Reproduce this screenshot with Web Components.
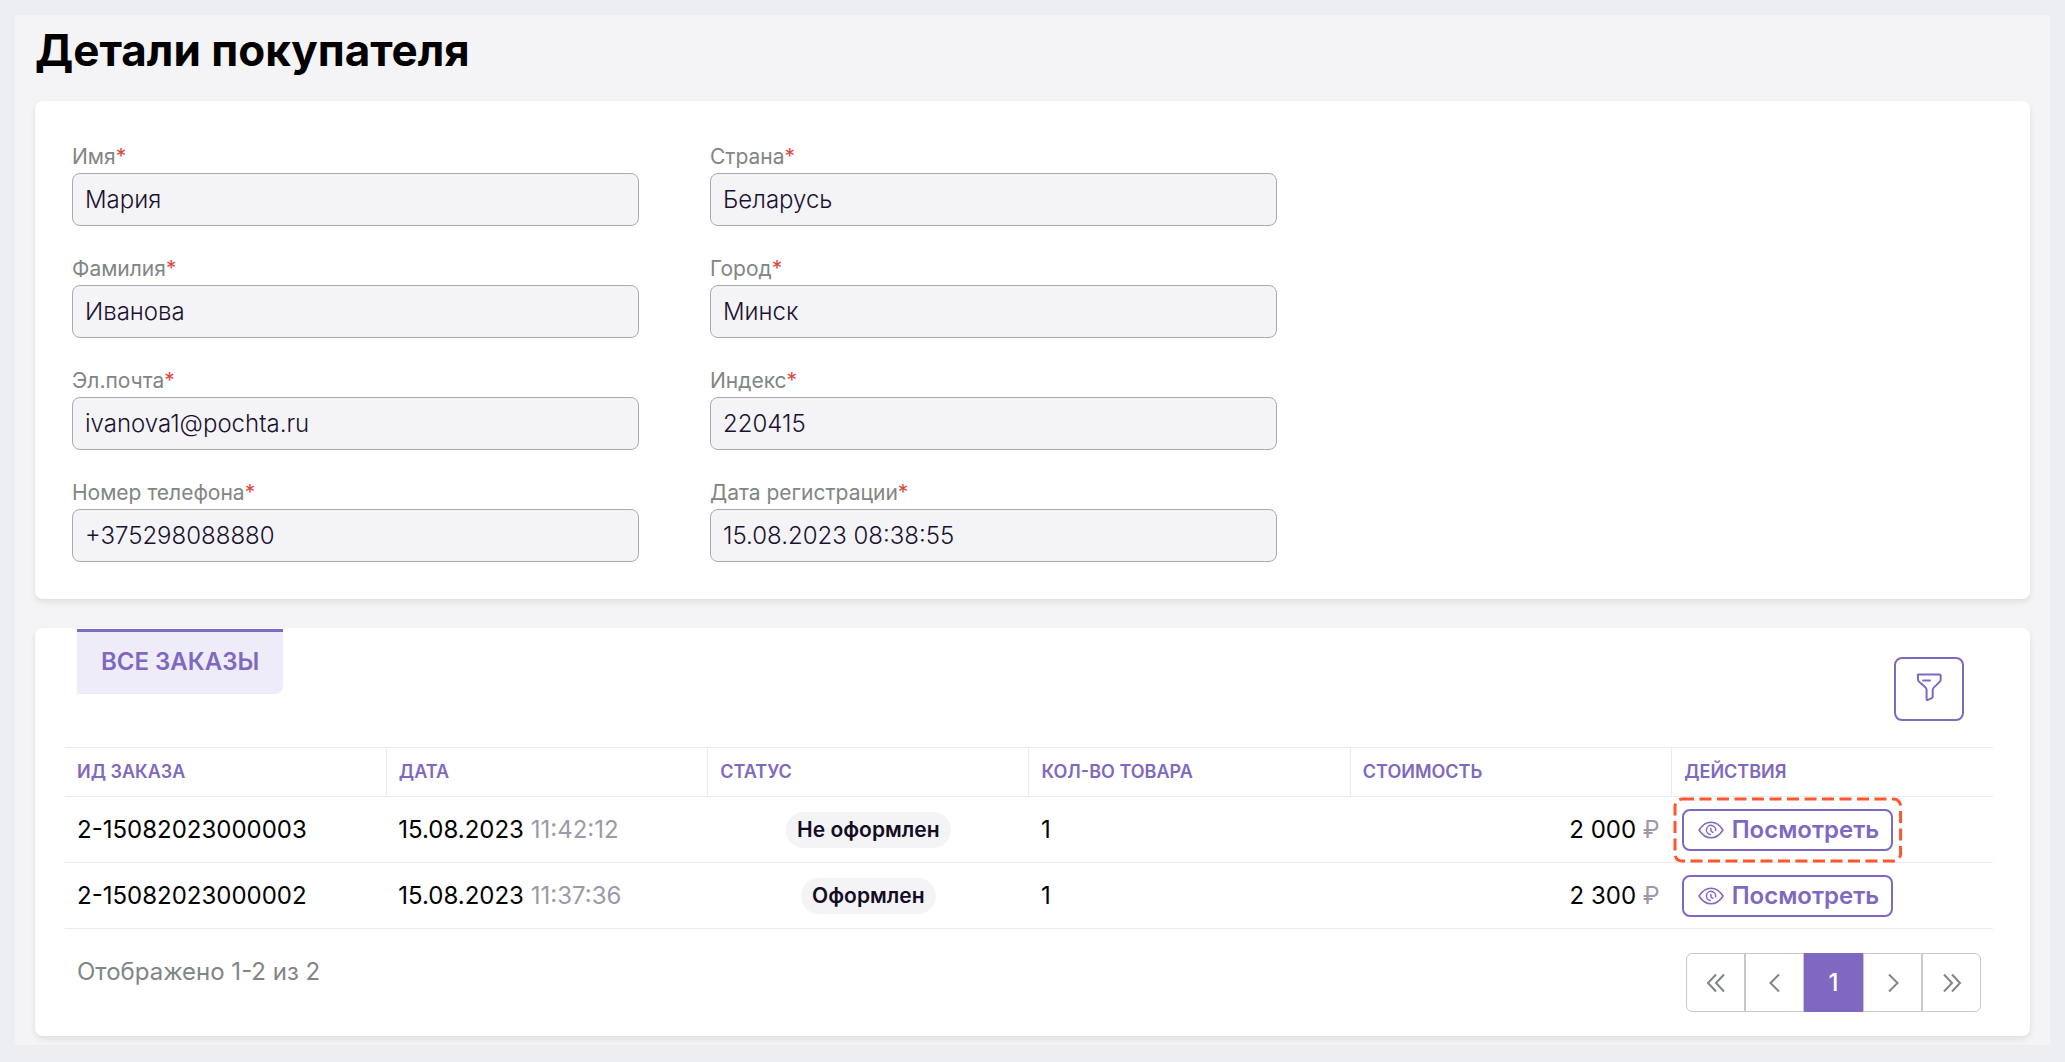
<!DOCTYPE html>
<html lang="ru">
<head>
<meta charset="utf-8">
<title>Детали покупателя</title>
<style>
  html { background: #edeef2; }
  body {
    margin: 0;
    font-family: Inter, "Liberation Sans", sans-serif;
    font-size: 24px;
    color: #000;
    --accent: #7f68c1;
    --muted: #808683;
    --faint: #9e99a8;
    --line: #ebeaf2;
    --soft: #f4f4f7;
  }
</style>
</head>
<body>
<customer-page>
  <span slot="title">Детали покупателя</span>
  <ui-card>
    <customer-form>
      <form-field label="Имя" value="Мария"></form-field>
      <form-field label="Страна" value="Беларусь"></form-field>
      <form-field label="Фамилия" value="Иванова"></form-field>
      <form-field label="Город" value="Минск"></form-field>
      <form-field label="Эл.почта" value="ivanova1@pochta.ru" type="email"></form-field>
      <form-field label="Индекс" value="220415"></form-field>
      <form-field label="Номер телефона" value="+375298088880" type="tel"></form-field>
      <form-field label="Дата регистрации" value="15.08.2023 08:38:55"></form-field>
    </customer-form>
  </ui-card>
  <ui-card>
    <orders-toolbar>Все заказы</orders-toolbar>
    <orders-table></orders-table>
    <orders-footer><span slot="summary">Отображено 1-2 из 2</span><page-nav></page-nav></orders-footer>
  </ui-card>
</customer-page>

<script>
const define = (name, html, setup) => {
  const template = document.createElement('template');
  template.innerHTML = html;
  customElements.define(name, class extends HTMLElement {
    constructor() {
      super();
      this.attachShadow({ mode: 'open' }).append(template.content.cloneNode(true));
    }
    connectedCallback() { if (setup) setup(this, this.shadowRoot); }
  });
};

define('customer-page', `
  <style>
    :host { display: block; box-sizing: border-box; min-height: 100vh; padding: 15px; background: #edeef2; }
    main { padding: 8px 20px 9px; background: #f4f4f6; }
    h1 { margin: 0 0 24px; font-size: 44px; line-height: 54px; font-weight: 700; }
    .cards { display: flex; flex-direction: column; gap: 29px; }
  </style>
  <main>
    <h1><slot name="title"></slot></h1>
    <div class="cards"><slot></slot></div>
  </main>`);

define('ui-card', `
  <style>
    :host { display: block; background: #fff; border-radius: 8px; box-shadow: 0 3px 6px rgba(0, 0, 0, .09); }
  </style>
  <slot></slot>`);

define('customer-form', `
  <style>
    :host { display: block; }
    form {
      display: grid; grid-template-columns: repeat(3, 1fr); gap: 30px 71px;
      padding: 43px 115px 37px 37px;
    }
    ::slotted(:nth-child(odd)) { grid-column: 1; }
    ::slotted(:nth-child(even)) { grid-column: 2; }
  </style>
  <form><slot></slot></form>`);

define('form-field', `
  <style>
    :host { display: block; }
    label { display: block; margin-bottom: 4px; font-size: 21px; line-height: 25px; color: var(--muted); }
    i { font-style: normal; color: #e0453f; }
    input {
      display: block; box-sizing: border-box; width: 100%; height: 53px; padding: 0 12px;
      border: 1px solid #a9a9af; border-radius: 8px; background: var(--soft);
      font: inherit; font-size: 24px; font-weight: 300; color: #1b1130;
    }
  </style>
  <label for="control"><span></span><i>*</i></label>
  <input id="control" readonly>`,
  (host, root) => {
    root.querySelector('span').textContent = host.getAttribute('label');
    const input = root.querySelector('input');
    input.type = host.getAttribute('type') || 'text';
    input.value = host.getAttribute('value');
  });

define('orders-toolbar', `
  <style>
    :host { display: flex; justify-content: space-between; align-items: flex-start; padding: 1px 66px 26px 42px; }
    .tab {
      border: 0; border-top: 3px solid var(--accent); border-radius: 0 0 8px 0; padding: 15px 24px 18px;
      background: #eeecf9; color: var(--accent); font: inherit; font-size: 24px; line-height: 29px;
      font-weight: 600; text-transform: uppercase;
    }
    .filter {
      display: grid; place-items: center; box-sizing: border-box; width: 70px; height: 64px; margin-top: 28px; padding: 0 0 4px;
      border: 2px solid var(--accent); border-radius: 8px; background: #fff; color: var(--accent);
    }
  </style>
  <button class="tab" type="button"><slot></slot></button>
  <button class="filter" type="button" aria-label="Фильтр">
    <svg width="26" height="28" viewBox="0 0 26 28" fill="none" stroke="currentColor" stroke-width="2" stroke-linejoin="round" stroke-linecap="round">
      <path d="M2.5 1.5h21q1.2 0 1.2 1.2v4.1q0 1-.8 1.800l-6.200 6q-1 1-1 2.400v6.600q0 1-.8 1.500l-4 1.700q-1.300.500-1.300-.900v-8.900q0-1.400-1-2.400l-6.700-6q-.9-.8-.9-2V2.700Q1.300 1.500 2.500 1.500z"/>
      <path d="M7 7.500h7"/>
    </svg>
  </button>`);

define('view-button', `
  <style>
    :host { display: inline-block; position: relative; vertical-align: top; }
    button {
      display: flex; align-items: center; gap: 8px; box-sizing: border-box; height: 42px; padding: 0 12px 0 14px;
      border: 2px solid var(--accent); border-radius: 8px; background: #fff; color: var(--accent);
      font: inherit; font-size: 24px; line-height: 29px; font-weight: 600;
    }
    .focus { display: none; position: absolute; inset: -12px -9px; width: calc(100% + 18px); height: calc(100% + 24px); overflow: visible; }
    .focus rect { x: 2px; y: 2px; width: calc(100% - 4px); height: calc(100% - 4px); }
    :host([marked]) .focus { display: block; }
  </style>
  <button type="button">
    <svg width="26" height="18" viewBox="0 0 26 18" fill="none" stroke="currentColor" stroke-width="1.500" stroke-linecap="round" stroke-linejoin="round">
      <path d="M1 9Q6 1.200 13 1.200T25 9Q20 16.800 13 16.800T1 9z"/>
      <path d="M12.200 13.500A4.600 4.600 0 1 1 17.600 9.600"/>
      <path d="M12.800 7.400Q12.600 10.600 14.800 11.200"/>
    </svg>
    <span>Посмотреть</span>
  </button>
  <svg class="focus" aria-hidden="true"><rect rx="7" fill="none" stroke="#ff5630" stroke-width="3" stroke-dasharray="12 5.500"/></svg>`);

define('orders-table', `
  <style>
    :host { display: block; padding: 0 37px 0 30px; }
    table { width: 100%; table-layout: fixed; border-collapse: collapse; font-size: 24px; line-height: 29px; }
    th {
      height: 48px; padding: 0 12px; border: solid var(--line); border-width: 1px 0 1px 1px; text-align: left;
      font-size: 18px; line-height: 22px; font-weight: 600; text-transform: uppercase; color: var(--accent);
    }
    th:first-child { border-left: 0; }
    td { height: 65px; padding: 0 12px; border-bottom: 1px solid var(--line); }
    td:last-child { padding-left: 10px; }
    .status { text-align: center; }
    .badge {
      display: inline-block; padding: 4px 11px; border-radius: 18px; background: var(--soft);
      font-size: 21px; line-height: 28px; font-weight: 600; color: #140c24; vertical-align: middle;
    }
    .cost { text-align: right; }
    small { font-size: inherit; color: var(--faint); }
  </style>
  <table>
    <thead><tr><th>Ид заказа</th><th>Дата</th><th>Статус</th><th>Кол-во товара</th><th>Стоимость</th><th>Действия</th></tr></thead>
    <tbody>
      <tr>
        <td>2-15082023000003</td><td>15.08.2023 <small>11:42:12</small></td>
        <td class="status"><span class="badge">Не оформлен</span></td><td>1</td>
        <td class="cost">2 000 <small>₽</small></td><td><view-button marked></view-button></td>
      </tr>
      <tr>
        <td>2-15082023000002</td><td>15.08.2023 <small>11:37:36</small></td>
        <td class="status"><span class="badge">Оформлен</span></td><td>1</td>
        <td class="cost">2 300 <small>₽</small></td><td><view-button></view-button></td>
      </tr>
    </tbody>
  </table>`);

define('orders-footer', `
  <style>
    :host { display: flex; justify-content: space-between; align-items: flex-start; padding: 24px 49px 24px 42px; }
    .summary { margin-top: 4px; line-height: 29px; color: var(--muted); }
  </style>
  <div class="summary"><slot name="summary"></slot></div>
  <slot></slot>`);

define('page-nav', `
  <style>
    :host { display: block; }
    nav { display: flex; }
    button {
      display: grid; place-items: center; box-sizing: border-box; width: 59px; height: 59px; padding: 0;
      border: 1px solid #c8c8c8; background: #fff; color: var(--muted); font: inherit; font-size: 24px; line-height: 29px;
    }
    button:first-child { border-radius: 6px 0 0 6px; }
    button:last-child { border-radius: 0 6px 6px 0; }
    [aria-current] { background: var(--accent); border-color: var(--accent); color: #fff; font-weight: 500; }
  </style>
  <nav aria-label="Страницы">
    <button type="button" aria-label="Первая"><svg width="20" height="20" viewBox="0 0 20 20" fill="none" stroke="currentColor" stroke-width="2"><path d="M10 1.500L2 10l8 8.500M18 1.500L10 10l8 8.500"/></svg></button>
    <button type="button" aria-label="Предыдущая"><svg width="20" height="20" viewBox="0 0 20 20" fill="none" stroke="currentColor" stroke-width="2"><path d="M14 1.500L5.500 10l8.500 8.500"/></svg></button>
    <button type="button" aria-current="page">1</button>
    <button type="button" aria-label="Следующая"><svg width="20" height="20" viewBox="0 0 20 20" fill="none" stroke="currentColor" stroke-width="2"><path d="M6 1.500l8.500 8.500L6 18.500"/></svg></button>
    <button type="button" aria-label="Последняя"><svg width="20" height="20" viewBox="0 0 20 20" fill="none" stroke="currentColor" stroke-width="2"><path d="M2 1.500l8 8.500-8 8.500M10 1.500l8 8.500-8 8.500"/></svg></button>
  </nav>`);
</script>
</body>
</html>
